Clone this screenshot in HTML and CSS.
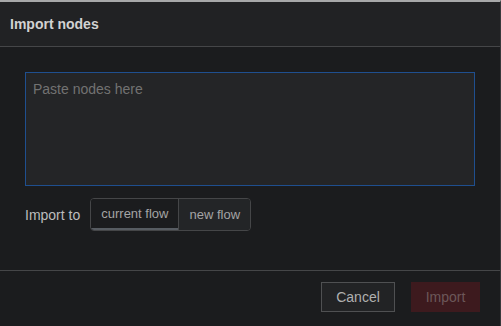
FILE: index.html
```html
<!DOCTYPE html>
<html lang="en">
  <head>
    <meta charset="UTF-8" />
    <meta name="viewport" content="width=device-width, initial-scale=1" />
    <title>Import nodes</title>
    <link rel="stylesheet" href="styles.css">
  </head>
  <body>
    <div class="dialog">
      <div class="dialog-title">Import nodes</div>

      <div class="dialog-body">
        <textarea
          id="importInput"
          class="import-input"
          placeholder="Paste nodes here"
          autofocus
        ></textarea>

        <div class="form-row">
          <label class="row-label">Import to</label>
          <div class="toggle-group">
            <button class="toggle selected">current flow</button>
            <button class="toggle">new flow</button>
          </div>
        </div>
      </div>

      <div class="dialog-footer">
        <button class="btn btn-cancel">Cancel</button>
        <button class="btn btn-primary" disabled>Import</button>
      </div>
    </div>
  </body>
</html>
```

FILE: styles.css
```css
:root {
  --font-default: 'Liberation Sans', 'Helvetica Neue', Arial, sans-serif;
  --bg-dialog: #1b1c1e;
  --bg-header: #212224;
  --border-default: #454648;
  --text-default: #c0c0c0;
}
* {
  box-sizing: border-box;
}
html,
body {
  height: 100%;
  margin: 0;
  padding: 0;
  background-color: var(--bg-dialog);
  font-family: var(--font-default);
  font-size: 14px;
  color: var(--text-default);
}
.dialog {
  display: flex;
  flex-direction: column;
  height: 100%;
  width: 501px;
  border-top: 2px solid #a7a8a9;
  border-right: 1px solid #38393b;
}
.dialog-title {
  height: 45px;
  display: flex;
  align-items: center;
  padding: 0 10px 1px;
  background-color: var(--bg-header);
  border-bottom: 1px solid var(--border-default);
  font-weight: 700;
  font-size: 14px;
  color: #d2d2d2;
}
.dialog-body {
  padding: 25px 25px 0;
  height: 224px;
  border-bottom: 1px solid var(--border-default);
}
.import-input {
  display: block;
  width: 450px;
  height: 114px;
  margin: 0;
  padding: 7px 7px;
  resize: none;
  font-family: var(--font-default);
  font-size: 14px;
  line-height: 18px;
  color: #c8c8c8;
  caret-color: #bbbbbb;
  background-color: #242527;
  border: 1px solid #1f4f8f;
  border-radius: 0;
  outline: none;
}
.import-input::placeholder {
  color: #727272;
}
.form-row {
  display: flex;
  align-items: center;
  gap: 10px;
  margin-top: 12px;
}
.row-label {
  font-size: 14px;
  color: #bdbdbd;
}
.toggle-group {
  display: flex;
  height: 33px;
  border: 1px solid var(--border-default);
  border-radius: 4px;
  overflow: hidden;
}
.toggle {
  font-family: var(--font-default);
  font-size: 13px;
  color: #a4a4a4;
  background-color: #232527;
  border: none;
  padding: 0 10px;
  margin: 0;
  cursor: pointer;
}
.toggle + .toggle {
  border-left: 1px solid var(--border-default);
}
.toggle.selected {
  background-color: var(--bg-dialog);
  border-bottom: 2px solid #575c62;
}
.dialog-footer {
  display: flex;
  justify-content: flex-end;
  gap: 16px;
  padding: 11px 20px 0;
}
.btn {
  height: 30px;
  padding: 0;
  font-family: var(--font-default);
  font-size: 14px;
  color: #b0b0b0;
  background-color: #222325;
  border: 1px solid #4f5052;
  border-radius: 0;
  cursor: pointer;
}
.btn-cancel {
  width: 74px;
}
.btn-primary {
  width: 69px;
  background-color: #3d1a1e;
  border-color: #3d1a1e;
  color: #6c5759;
  cursor: default;
}
```
